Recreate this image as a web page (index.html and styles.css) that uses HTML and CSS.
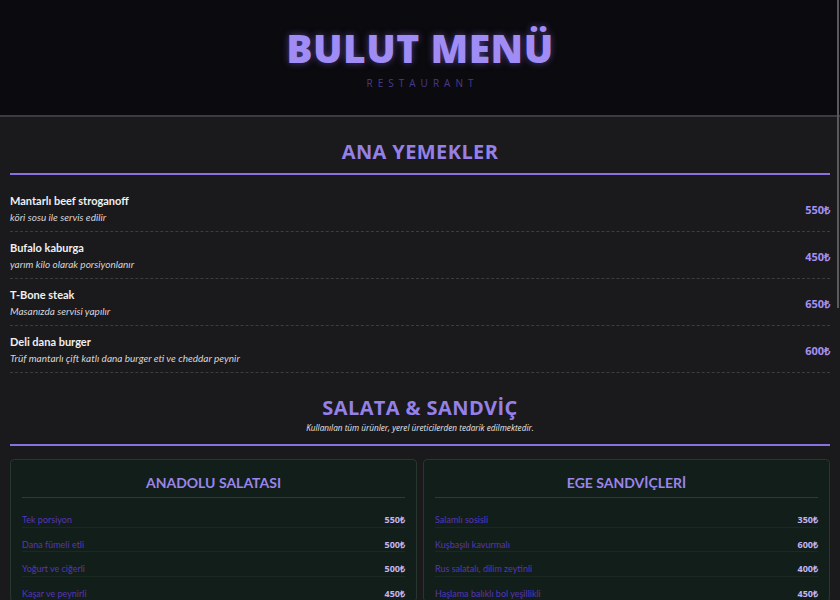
FILE: index.html
```html
<!DOCTYPE html>
<html lang="tr">
<head>
<meta charset="utf-8">
<title>Bulut Menü</title>
<link rel="stylesheet" href="styles.css">
</head>
<body>
<div class="scroll-thumb"></div>
<header class="site-header">
  <h1 class="brand">BULUT MENÜ</h1>
  <div class="tagline">RESTAURANT</div>
</header>
<main class="menu">
  <section class="section">
    <div class="section-head">
      <h2 class="section-title">ANA YEMEKLER</h2>
    </div>
    <ul class="items">
      <li class="item">
        <div class="item-text">
          <div class="item-name">Mantarlı beef stroganoff</div>
          <div class="item-desc">köri sosu ile servis edilir</div>
        </div>
        <div class="item-price">550₺</div>
      </li>
      <li class="item">
        <div class="item-text">
          <div class="item-name">Bufalo kaburga</div>
          <div class="item-desc">yarım kilo olarak porsiyonlanır</div>
        </div>
        <div class="item-price">450₺</div>
      </li>
      <li class="item">
        <div class="item-text">
          <div class="item-name">T-Bone steak</div>
          <div class="item-desc">Masanızda servisi yapılır</div>
        </div>
        <div class="item-price">650₺</div>
      </li>
      <li class="item">
        <div class="item-text">
          <div class="item-name">Deli dana burger</div>
          <div class="item-desc">Trüf mantarlı çift katlı dana burger eti ve cheddar peynir</div>
        </div>
        <div class="item-price">600₺</div>
      </li>
    </ul>
  </section>
  <section class="section">
    <div class="section-head section-head-2">
      <h2 class="section-title">SALATA &amp; SANDVİÇ</h2>
      <p class="section-note">Kullanılan tüm ürünler, yerel üreticilerden tedarik edilmektedir.</p>
    </div>
    <div class="cards">
      <div class="card">
        <h3 class="card-title">ANADOLU SALATASI</h3>
        <ul class="rows">
          <li class="row"><span class="row-name">Tek porsiyon</span><span class="row-price">550₺</span></li>
          <li class="row"><span class="row-name">Dana fümeli etli</span><span class="row-price">500₺</span></li>
          <li class="row"><span class="row-name">Yoğurt ve ciğerli</span><span class="row-price">500₺</span></li>
          <li class="row"><span class="row-name">Kaşar ve peynirli</span><span class="row-price">450₺</span></li>
        </ul>
      </div>
      <div class="card">
        <h3 class="card-title">EGE SANDVİÇLERİ</h3>
        <ul class="rows">
          <li class="row"><span class="row-name">Salamlı sosisli</span><span class="row-price">350₺</span></li>
          <li class="row"><span class="row-name">Kuşbaşılı kavurmalı</span><span class="row-price">600₺</span></li>
          <li class="row"><span class="row-name">Rus salatalı, dilim zeytinli</span><span class="row-price">400₺</span></li>
          <li class="row"><span class="row-name">Haşlama balıklı bol yeşillikli</span><span class="row-price">450₺</span></li>
        </ul>
      </div>
    </div>
  </section>
</main>
</body>
</html>
```

FILE: styles.css
```css
* { box-sizing: border-box; }
html, body { margin: 0; padding: 0; }
body {
  background: #1a191c;
  font-family: "Lato", "Noto Sans", sans-serif;
  color: #eeeeee;
  overflow: hidden;
}
ul { list-style: none; margin: 0; padding: 0; }
h1, h2, h3, p { margin: 0; }

.scroll-thumb {
  position: fixed;
  top: 0;
  right: 1px;
  width: 2px;
  height: 308px;
  background: #5a5a5e;
  z-index: 10;
}

.site-header {
  background: #0b0a0e;
  border-bottom: 2px solid #3c3b40;
  height: 117px;
  padding-top: 26px;
  text-align: center;
}
.brand {
  font-family: "Open Sans", sans-serif;
  font-weight: 800;
  font-size: 39px;
  line-height: 44px;
  letter-spacing: 0.5px;
  color: #a08cf5;
  text-shadow: 0 0 7px rgba(140, 110, 240, 0.5);
}
.tagline {
  margin-top: 7px;
  font-family: "Open Sans", sans-serif;
  font-size: 10px;
  line-height: 12px;
  letter-spacing: 5px;
  padding-left: 5px;
  color: #4a3a8c;
}

.menu {
  padding: 0 10px;
}
.section-head {
  padding-top: 22px;
  padding-bottom: 8px;
  border-bottom: 2px solid #8a70e0;
  text-align: center;
}
.section-title {
  font-family: "Open Sans", sans-serif;
  font-weight: 700;
  font-size: 20px;
  line-height: 26px;
  letter-spacing: 0.4px;
  color: #9580e8;
}
.items {
  margin-top: 10px;
}
.item {
  display: flex;
  align-items: center;
  justify-content: space-between;
  padding: 8px 0 6px;
  height: 47px;
  border-bottom: 1px dashed #3d3c42;
}
.item-name {
  font-weight: 700;
  font-size: 11px;
  line-height: 15px;
  color: #f0f0f2;
}
.item-desc {
  margin-top: 2px;
  font-style: italic;
  font-size: 10px;
  line-height: 15px;
  color: #d6d6da;
}
.item-price {
  font-family: "Open Sans", sans-serif;
  font-weight: 700;
  font-size: 11px;
  color: #a590f0;
}

.section-head-2 {
  padding-top: 22px;
  padding-bottom: 10px;
}
.section-note {
  margin-top: 1px;
  font-family: "Open Sans", sans-serif;
  font-style: italic;
  font-size: 8.2px;
  line-height: 12px;
  color: #e8e8ea;
}

.cards {
  display: grid;
  grid-template-columns: 1fr 1fr;
  gap: 6px;
  margin-top: 13px;
}
.card {
  background: #121e19;
  border: 1px solid #26372d;
  border-radius: 4px;
  padding: 10px 11px 0;
}
.card-title {
  font-family: "Lato", sans-serif;
  font-weight: 700;
  font-size: 14px;
  line-height: 26px;
  text-align: center;
  color: #9a85ea;
  padding-bottom: 1px;
  border-bottom: 1px solid #2b3d33;
}
.rows {
  padding-top: 5px;
}
.row {
  display: flex;
  justify-content: space-between;
  align-items: center;
  font-size: 9px;
  border-bottom: 1px solid #1a2a22;
  padding-top: 10px;
  height: 24.5px;
}
.row-name {
  color: #5636b8;
}
.row-price {
  font-family: "Open Sans", sans-serif;
  font-weight: 700;
  color: #c4b5f2;
}
```
